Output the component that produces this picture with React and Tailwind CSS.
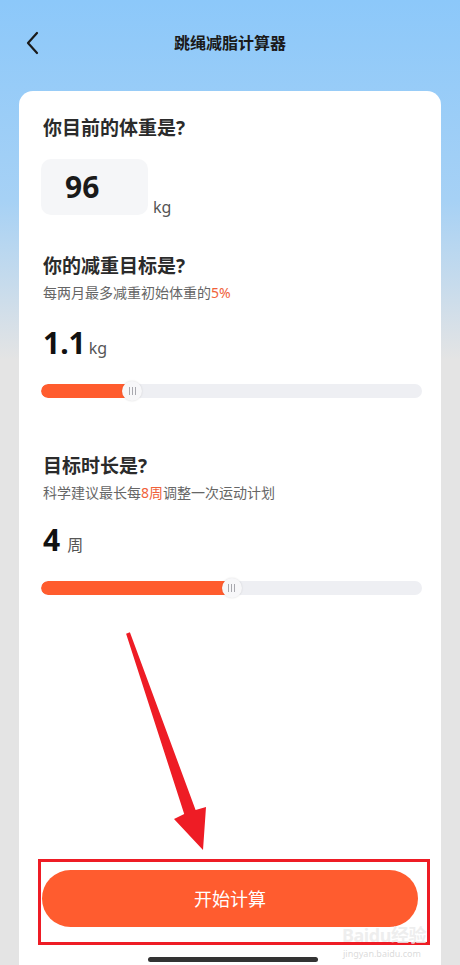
import React from 'react';

const font = { fontFamily: '"Noto Sans", "Noto Sans CJK SC", sans-serif' };

const Slider = ({ percent }) => {
  return (
    <div className="relative h-[20px] flex items-center">
      <div className="w-full h-[14px] rounded-full bg-[#eeeff3] overflow-hidden">
        <div className="h-full bg-[#ff5c2e] rounded-l-full" style={{ width: `${percent}%` }} />
      </div>
      {/* thumb */}
      <div
        className="absolute top-0 -ml-[10px] w-[20px] h-[20px] rounded-full bg-[#f7f7f9] shadow-[0_0_2px_rgba(0,0,0,0.15)] flex items-center justify-center gap-[2px]"
        style={{ left: `${percent}%` }}
      >
        <span className="w-[1px] h-[8px] bg-[#a8a8ae]" />
        <span className="w-[1px] h-[8px] bg-[#a8a8ae]" />
        <span className="w-[1px] h-[8px] bg-[#a8a8ae]" />
      </div>
    </div>
  );
};

const App = () => {
  return (
    <div
      className="relative w-[460px] h-[965px] overflow-hidden flex flex-col bg-[linear-gradient(180deg,#8cc8fa_0px,#a6d1f5_200px,#e4e4e4_360px,#e4e4e4_100%)]"
      style={font}
    >
      {/* Nav bar */}
      <div className="h-[91px] shrink-0 flex items-start pt-[31px] px-[24px] relative">
        <svg width="18" height="24" viewBox="0 0 18 24">
          <polyline points="13,2 4,12 13,22" fill="none" stroke="#1a1a1a" strokeWidth="2.2" strokeLinecap="round" strokeLinejoin="round" />
        </svg>
        <div className="absolute left-0 right-0 top-[31px] text-center text-[16px] font-semibold text-[#1a1a1a] leading-[24px]">
          跳绳减脂计算器
        </div>
      </div>

      {/* Card */}
      <div className="mx-[19px] flex-1 bg-white rounded-t-[14px] pl-[24px] pr-[19px] pt-[24px] flex flex-col">
        <h2 className="text-[19px] leading-[26px] font-bold text-[#2b2b2b]">你目前的体重是?</h2>

        <div className="flex items-end mt-[18px] -ml-[2px]">
          <div className="w-[107px] h-[56px] bg-[#f5f6f8] rounded-[10px] pl-[24px] flex items-center">
            <span className="text-[30px] font-bold text-[#1a1a1a] leading-none">96</span>
          </div>
          <span className="ml-[5px] text-[16px] text-[#555] leading-[20px] mb-[-2px]">kg</span>
        </div>

        <h2 className="mt-[38px] text-[19px] leading-[26px] font-bold text-[#2b2b2b]">你的减重目标是?</h2>
        <p className="mt-[5px] text-[14px] leading-[18px] text-[#666]">
          每两月最多减重初始体重的<span className="text-[#f0623a]">5%</span>
        </p>

        <div className="mt-[25px] flex items-baseline h-[32px]">
          <span className="text-[30px] font-bold text-[#111] leading-[32px]">1.1</span>
          <span className="ml-[3px] text-[16px] text-[#555]">kg</span>
        </div>

        <div className="mt-[22px] -ml-[2px]">
          <Slider percent={24} />
        </div>

        <h2 className="mt-[52px] text-[19px] leading-[26px] font-bold text-[#2b2b2b]">目标时长是?</h2>
        <p className="mt-[5px] text-[14px] leading-[18px] text-[#666]">
          科学建议最长每<span className="text-[#f0623a]">8周</span>调整一次运动计划
        </p>

        <div className="mt-[22px] flex items-baseline h-[32px]">
          <span className="text-[30px] font-bold text-[#111] leading-[32px]">4</span>
          <span className="ml-[7px] text-[16px] text-[#555]">周</span>
        </div>

        <div className="mt-[22px] -ml-[2px]">
          <Slider percent={50} />
        </div>

        <div className="flex-1" />

        <button className="-ml-[1px] mr-[4px] h-[57px] rounded-full bg-[#ff5c2f] text-white text-[18px] leading-none">
          开始计算
        </button>

        <div className="h-[38px] flex items-end justify-center pb-[3px]">
          <div className="w-[170px] h-[5px] rounded-full bg-[#333]" />
        </div>
      </div>

      {/* Annotation: arrow */}
      <svg className="absolute left-0 top-0 pointer-events-none" width="460" height="965">
        <polygon
          points="126.1,633.7 129.9,632.3 195.6,810 206,807 203,850 174,819 184.2,814"
          fill="#ee1c25"
        />
      </svg>

      {/* Annotation: red frame */}
      <div className="absolute left-[38px] top-[859px] w-[392px] h-[86px] border-[3px] border-[#ee1c25] pointer-events-none" />

      {/* watermark */}
      <div className="absolute left-[342px] top-[926px] text-[18px] font-bold leading-[18px] text-[rgba(235,235,235,0.85)] tracking-tight">
        Baidu经验
      </div>
      <div className="absolute left-[343px] top-[949px] text-[9px] leading-[10px] text-[rgba(210,210,210,0.8)]">
        jingyan.baidu.com
      </div>
    </div>
  );
};

export default App;
